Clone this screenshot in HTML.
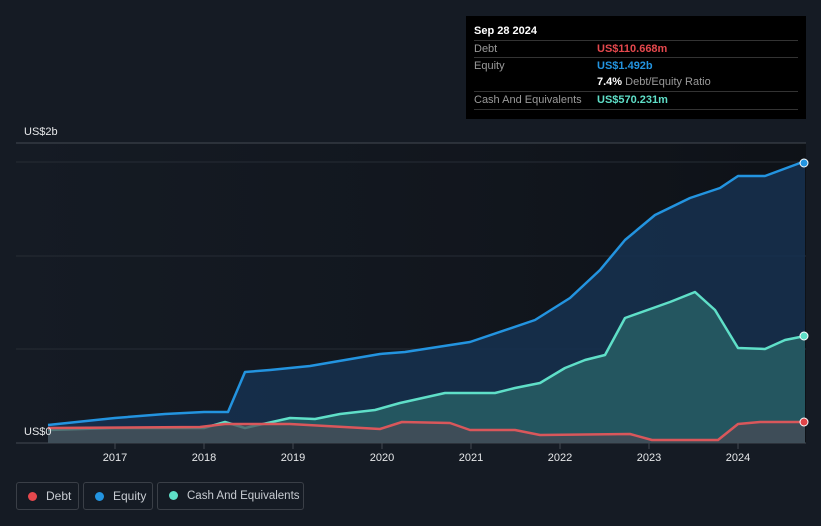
<!DOCTYPE html>
<html><head><style>
html,body{margin:0;width:821px;height:526px;overflow:hidden}
body{background:#151b24;font-family:"Liberation Sans",sans-serif;position:relative}
.tip{position:absolute;left:466px;top:16px;width:340px;height:103px;background:#000;}
.tip .h{position:absolute;left:8px;top:9px;color:#fff;font-size:11px;font-weight:bold}
.row{position:absolute;left:8px;width:324px;border-top:1px solid #333;font-size:11px;color:#9a9a9a;height:17px;line-height:17px;white-space:nowrap}
.row span{position:absolute;left:123px;font-weight:bold}
.leg{position:absolute;top:482px;height:28px;border:1px solid #3a3f47;border-radius:3px;color:#c8ccd2;font-size:12px;line-height:26px;box-sizing:border-box;white-space:nowrap}
.leg i{display:inline-block;width:9px;height:9px;border-radius:50%;margin:0 9px 0 11px;vertical-align:-1px}
</style></head><body>
<svg width="821" height="526" style="position:absolute;left:0;top:0">
<defs><linearGradient id="g" x1="0" x2="1"><stop offset="0" stop-color="#10141b" stop-opacity="0"/><stop offset="0.5" stop-color="#10141b" stop-opacity="0.6"/><stop offset="1" stop-color="#0c0f14" stop-opacity="0.8"/></linearGradient></defs>
<rect x="16" y="143" width="790" height="300" fill="url(#g)"/>
<line x1="16" y1="143" x2="806" y2="143" stroke="#444a52"/>
<line x1="16" y1="162" x2="806" y2="162" stroke="#262c35"/>
<line x1="16" y1="256" x2="806" y2="256" stroke="#262c35"/>
<line x1="16" y1="349" x2="806" y2="349" stroke="#262c35"/>
<line x1="16" y1="443" x2="806" y2="443" stroke="#444a52"/>
<g stroke="#444a52"><line x1="115" y1="443" x2="115" y2="449"/><line x1="204" y1="443" x2="204" y2="449"/><line x1="293" y1="443" x2="293" y2="449"/><line x1="382" y1="443" x2="382" y2="449"/><line x1="471" y1="443" x2="471" y2="449"/><line x1="560" y1="443" x2="560" y2="449"/><line x1="649" y1="443" x2="649" y2="449"/><line x1="738" y1="443" x2="738" y2="449"/></g>
<polygon fill="#163150" opacity="0.85" points="48,443 48,425 115,418 165,414 204,412 228,412 245,372 270,370 310,366 380,354 405,352 470,342 535,320 570,298 600,270 625,240 655,215 690,198 720,188 738,176 765,176 800,163 805,162 805,443"/>
<polyline fill="none" stroke="#2394e0" stroke-width="2.5" stroke-linejoin="round" points="48,425 115,418 165,414 204,412 228,412 245,372 270,370 310,366 380,354 405,352 470,342 535,320 570,298 600,270 625,240 655,215 690,198 720,188 738,176 765,176 800,163"/>
<polygon fill="#2a6468" opacity="0.75" points="48,443 48,430 115,428 204,428 225,422 245,428 290,418 315,419 340,414 375,410 400,403 445,393 495,393 515,388 540,383 565,368 585,360 605,355 625,318 670,302 695,292 715,310 738,348 765,349 785,340 805,336 805,443"/>
<polyline fill="none" stroke="#5fdfc8" stroke-width="2.5" stroke-linejoin="round" points="48,430 115,428 204,428 225,422 245,428 290,418 315,419 340,414 375,410 400,403 445,393 495,393 515,388 540,383 565,368 585,360 605,355 625,318 670,302 695,292 715,310 738,348 765,349 785,340 805,336"/>
<polygon fill="#4a4a55" opacity="0.7" points="48,443 48,428 200,427 225,424 290,424 380,429 402,422 450,423 470,430 515,430 540,435 630,434 652,440 718,440 738,424 760,422 805,422 805,443"/>
<polyline fill="none" stroke="#d9575b" stroke-width="2.5" stroke-linejoin="round" points="48,428 200,427 225,424 290,424 380,429 402,422 450,423 470,430 515,430 540,435 630,434 652,440 718,440 738,424 760,422 805,422"/>
<circle cx="804" cy="163" r="4" fill="#2394e0" stroke="#fff" stroke-width="1"/>
<circle cx="804" cy="336" r="4" fill="#5fdfc8" stroke="#fff" stroke-width="1"/>
<circle cx="804" cy="422" r="4" fill="#e04448" stroke="#fff" stroke-width="1"/>
<g fill="#e6e8ea" font-size="11" font-family="Liberation Sans"><text x="24" y="135">US$2b</text><text x="24" y="435">US$0</text>
<g text-anchor="middle"><text x="115" y="461">2017</text><text x="204" y="461">2018</text><text x="293" y="461">2019</text><text x="382" y="461">2020</text><text x="471" y="461">2021</text><text x="560" y="461">2022</text><text x="649" y="461">2023</text><text x="738" y="461">2024</text></g></g>
</svg>
<div class="tip"><div class="h">Sep 28 2024</div>
<div class="row" style="top:24px">Debt<span style="color:#e5484d">US$110.668m</span></div>
<div class="row" style="top:41px">Equity<span style="color:#2394e0">US$1.492b</span></div>
<div class="row" style="top:58px;border-top:none"><span style="color:#fff">7.4% <b style="color:#9a9a9a;font-weight:normal">Debt/Equity Ratio</b></span></div>
<div class="row" style="top:75px;border-bottom:1px solid #333">Cash And Equivalents<span style="color:#5fdfc8">US$570.231m</span></div>
</div>
<div class="leg" style="left:16px;width:63px"><i style="background:#e5484d"></i>Debt</div>
<div class="leg" style="left:83px;width:70px"><i style="background:#2394e0"></i>Equity</div>
<div class="leg" style="left:157px;width:147px;font-size:11.5px"><i style="background:#5fdfc8"></i>Cash And Equivalents</div>
</body></html>
